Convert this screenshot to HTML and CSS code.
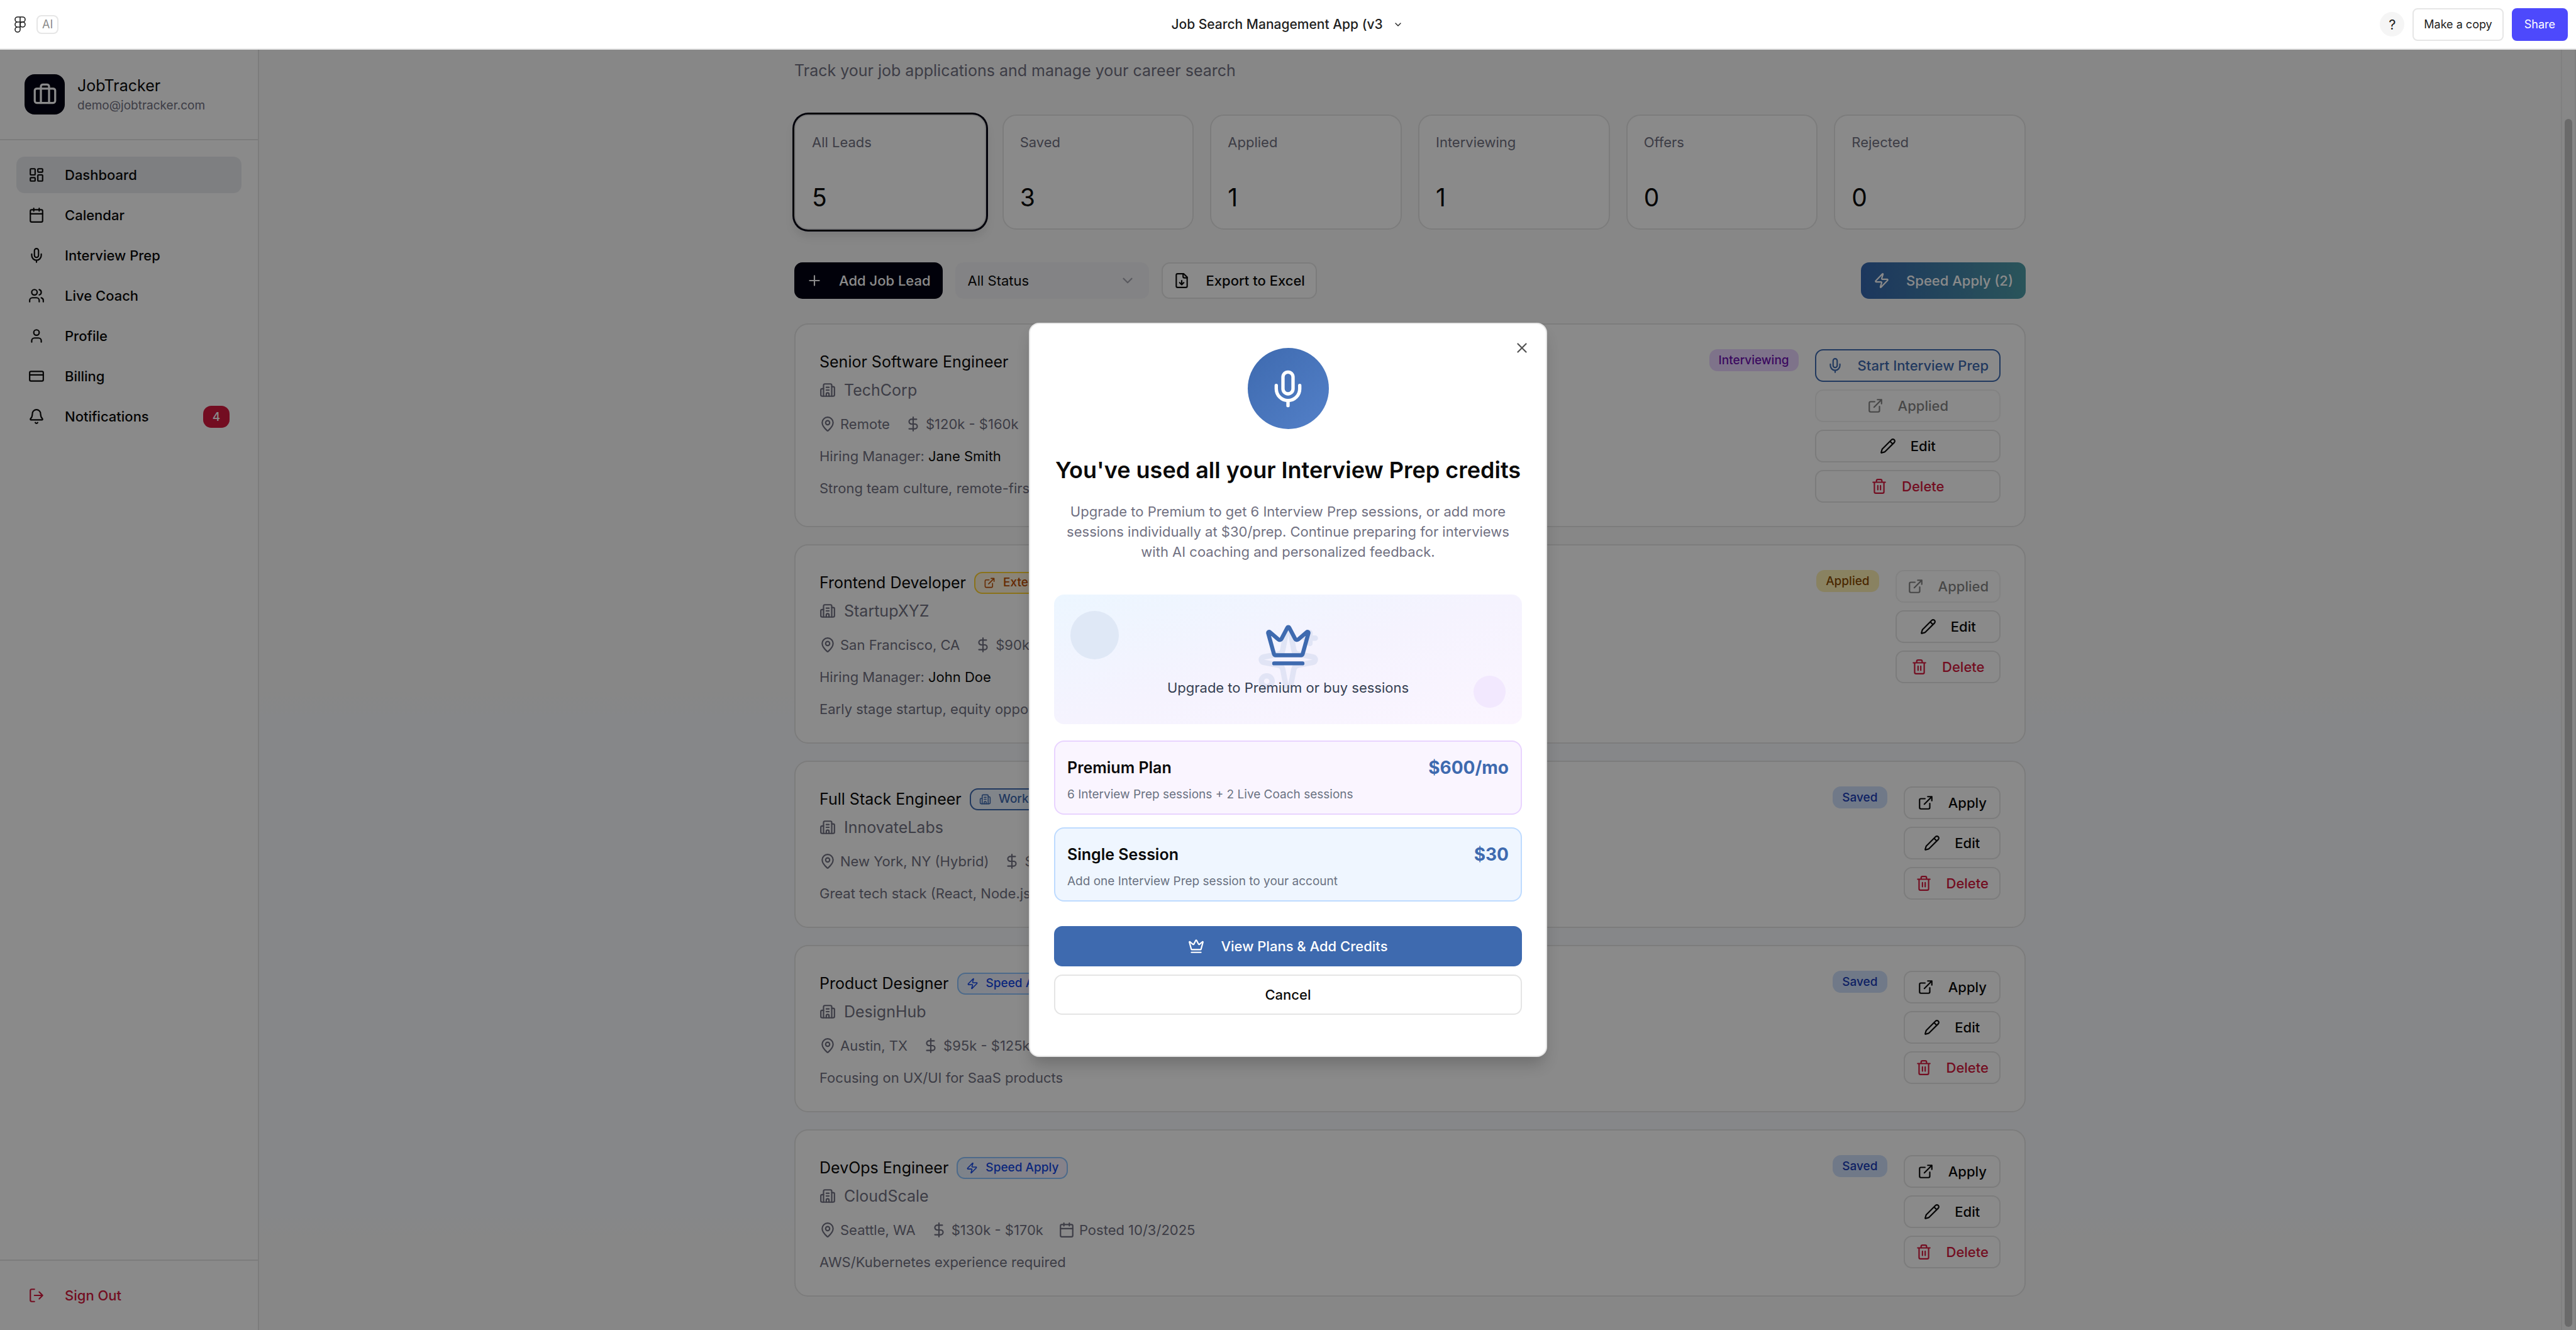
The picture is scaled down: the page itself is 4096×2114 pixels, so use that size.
FILE: index.html
```html
<!DOCTYPE html>
<html lang="en">
<head>
<meta charset="utf-8">
<title>Job Search Management App</title>
<link rel="stylesheet" href="styles.css">
</head>
<body>
<svg class="sprite" aria-hidden="true">
  <symbol id="i-briefcase" viewBox="0 0 24 24"><path d="M16 20V4a2 2 0 0 0-2-2h-4a2 2 0 0 0-2 2v16"/><rect width="20" height="14" x="2" y="6" rx="2"/></symbol>
  <symbol id="i-dashboard" viewBox="0 0 24 24"><rect width="7" height="9" x="3" y="3" rx="1"/><rect width="7" height="5" x="14" y="3" rx="1"/><rect width="7" height="9" x="14" y="12" rx="1"/><rect width="7" height="5" x="3" y="16" rx="1"/></symbol>
  <symbol id="i-calendar" viewBox="0 0 24 24"><path d="M8 2v4M16 2v4"/><rect width="18" height="18" x="3" y="4" rx="2"/><path d="M3 10h18"/></symbol>
  <symbol id="i-mic" viewBox="0 0 24 24"><path d="M12 19v3M19 10v2a7 7 0 0 1-14 0v-2"/><rect x="9" y="2" width="6" height="13" rx="3"/></symbol>
  <symbol id="i-users" viewBox="0 0 24 24"><path d="M16 21v-2a4 4 0 0 0-4-4H6a4 4 0 0 0-4 4v2M16 3.128a4 4 0 0 1 0 7.744M22 21v-2a4 4 0 0 0-3-3.87"/><circle cx="9" cy="7" r="4"/></symbol>
  <symbol id="i-user" viewBox="0 0 24 24"><path d="M19 21v-2a4 4 0 0 0-4-4H9a4 4 0 0 0-4 4v2"/><circle cx="12" cy="7" r="4"/></symbol>
  <symbol id="i-card" viewBox="0 0 24 24"><rect width="20" height="14" x="2" y="5" rx="2"/><path d="M2 10h20"/></symbol>
  <symbol id="i-bell" viewBox="0 0 24 24"><path d="M10.268 21a2 2 0 0 0 3.464 0M3.262 15.326A1 1 0 0 0 4 17h16a1 1 0 0 0 .74-1.673C19.41 13.956 18 12.499 18 8A6 6 0 0 0 6 8c0 4.499-1.411 5.956-2.738 7.326"/></symbol>
  <symbol id="i-logout" viewBox="0 0 24 24"><path d="m16 17 5-5-5-5M21 12H9M9 21H5a2 2 0 0 1-2-2V5a2 2 0 0 1 2-2h4"/></symbol>
  <symbol id="i-plus" viewBox="0 0 24 24"><path d="M5 12h14M12 5v14"/></symbol>
  <symbol id="i-chevron" viewBox="0 0 24 24"><path d="m6 9 6 6 6-6"/></symbol>
  <symbol id="i-file-down" viewBox="0 0 24 24"><path d="M15 2H6a2 2 0 0 0-2 2v16a2 2 0 0 0 2 2h12a2 2 0 0 0 2-2V7Z"/><path d="M14 2v4a2 2 0 0 0 2 2h4M12 18v-6M9 15l3 3 3-3"/></symbol>
  <symbol id="i-zap" viewBox="0 0 24 24"><path d="M4 14a1 1 0 0 1-.78-1.63l9.9-10.2a.5.5 0 0 1 .86.46l-1.92 6.02A1 1 0 0 0 13 10h7a1 1 0 0 1 .78 1.63l-9.9 10.2a.5.5 0 0 1-.86-.46l1.92-6.02A1 1 0 0 0 11 14z"/></symbol>
  <symbol id="i-building" viewBox="0 0 24 24"><path d="M10 12h4M10 8h4M14 21v-3a2 2 0 0 0-4 0v3"/><path d="M6 10H4a2 2 0 0 0-2 2v7a2 2 0 0 0 2 2h16a2 2 0 0 0 2-2V9a2 2 0 0 0-2-2h-2"/><path d="M6 21V5a2 2 0 0 1 2-2h8a2 2 0 0 1 2 2v16"/></symbol>
  <symbol id="i-pin" viewBox="0 0 24 24"><path d="M20 10c0 4.993-5.539 10.193-7.399 11.799a1 1 0 0 1-1.202 0C9.539 20.193 4 14.993 4 10a8 8 0 0 1 16 0"/><circle cx="12" cy="10" r="3"/></symbol>
  <symbol id="i-dollar" viewBox="0 0 24 24"><path d="M12 2v20M17 5H9.500a3.500 3.500 0 0 0 0 7h5a3.500 3.500 0 0 1 0 7H6"/></symbol>
  <symbol id="i-external" viewBox="0 0 24 24"><path d="M15 3h6v6M10 14 21 3M18 13v6a2 2 0 0 1-2 2H5a2 2 0 0 1-2-2V8a2 2 0 0 1 2-2h6"/></symbol>
  <symbol id="i-pencil" viewBox="0 0 24 24"><path d="M21.174 6.812a1 1 0 0 0-3.986-3.987L3.842 16.174a2 2 0 0 0-.5.83l-1.321 4.352a.5.5 0 0 0 .623.622l4.353-1.320a2 2 0 0 0 .83-.497zM15 5l4 4"/></symbol>
  <symbol id="i-trash" viewBox="0 0 24 24"><path d="M10 11v6M14 11v6M19 6v14a2 2 0 0 1-2 2H7a2 2 0 0 1-2-2V6M3 6h18M8 6V4a2 2 0 0 1 2-2h4a2 2 0 0 1 2 2v2"/></symbol>
  <symbol id="i-crown" viewBox="0 0 24 24"><path d="M11.562 3.266a.5.5 0 0 1 .876 0L15.390 8.870a1 1 0 0 0 1.516.294L21.183 5.500a.5.5 0 0 1 .798.519l-2.834 10.246a1 1 0 0 1-.956.734H5.810a1 1 0 0 1-.957-.734L2.020 6.020a.5.5 0 0 1 .798-.519l4.276 3.664a1 1 0 0 0 1.516-.294zM5 21h14"/></symbol>
  <symbol id="i-sparkles" viewBox="0 0 24 24"><path d="M11.017 2.814a1 1 0 0 1 1.966 0l1.051 5.558a2 2 0 0 0 1.594 1.594l5.558 1.051a1 1 0 0 1 0 1.966l-5.558 1.051a2 2 0 0 0-1.594 1.594l-1.051 5.558a1 1 0 0 1-1.966 0l-1.051-5.558a2 2 0 0 0-1.594-1.594l-5.558-1.051a1 1 0 0 1 0-1.966l5.558-1.051a2 2 0 0 0 1.594-1.594zM20 2v4M22 4h-4"/><circle cx="4" cy="20" r="2"/></symbol>
  <symbol id="i-close" viewBox="0 0 24 24"><path d="M18 6 6 18M6 6l12 12"/></symbol>
</svg>

<header class="topbar">
  <div class="topbar-brand">
    <svg class="figma-mark" viewBox="0 0 18 26" aria-hidden="true"><path d="M9 1H5a4 4 0 0 0 0 8h4zM9 1h4a4 4 0 0 1 0 8H9zM9 9H5a4 4 0 0 0 0 8h4zM9 17H5a4 4 0 1 0 4 4z"/><circle cx="13" cy="13" r="4"/></svg>
    <span class="ai-tag">AI</span>
  </div>
  <button class="file-title" type="button">Job Search Management App (v3 <svg class="icon title-chevron"><use href="#i-chevron"/></svg></button>
  <div class="topbar-actions">
    <button class="help" type="button">?</button>
    <button class="copy" type="button">Make a copy</button>
    <button class="share" type="button">Share</button>
  </div>
</header>

<div class="workspace">
  <aside class="sidebar">
    <div class="brand">
      <span class="brand-logo"><svg class="icon icon-lg"><use href="#i-briefcase"/></svg></span>
      <div>
        <div class="brand-name">JobTracker</div>
        <div class="brand-mail">demo@jobtracker.com</div>
      </div>
    </div>
    <nav class="nav">
      <a class="nav-item active" href="#dashboard"><svg class="icon"><use href="#i-dashboard"/></svg>Dashboard</a>
      <a class="nav-item" href="#calendar"><svg class="icon"><use href="#i-calendar"/></svg>Calendar</a>
      <a class="nav-item" href="#prep"><svg class="icon"><use href="#i-mic"/></svg>Interview Prep</a>
      <a class="nav-item" href="#coach"><svg class="icon"><use href="#i-users"/></svg>Live Coach</a>
      <a class="nav-item" href="#profile"><svg class="icon"><use href="#i-user"/></svg>Profile</a>
      <a class="nav-item" href="#billing"><svg class="icon"><use href="#i-card"/></svg>Billing</a>
      <a class="nav-item" href="#notifications"><svg class="icon"><use href="#i-bell"/></svg>Notifications<span class="count">4</span></a>
    </nav>
    <div class="sidebar-foot">
      <button class="nav-item sign-out" type="button"><svg class="icon"><use href="#i-logout"/></svg>Sign Out</button>
    </div>
  </aside>

  <main class="content">
    <div class="container">
      <p class="subtitle">Track your job applications and manage your career search</p>

      <section class="stats">
        <button class="stat selected" type="button"><span class="stat-label">All Leads</span><span class="stat-value">5</span></button>
        <button class="stat" type="button"><span class="stat-label">Saved</span><span class="stat-value">3</span></button>
        <button class="stat" type="button"><span class="stat-label">Applied</span><span class="stat-value">1</span></button>
        <button class="stat" type="button"><span class="stat-label">Interviewing</span><span class="stat-value">1</span></button>
        <button class="stat" type="button"><span class="stat-label">Offers</span><span class="stat-value">0</span></button>
        <button class="stat" type="button"><span class="stat-label">Rejected</span><span class="stat-value">0</span></button>
      </section>

      <div class="toolbar">
        <button class="btn btn-dark" type="button"><svg class="icon"><use href="#i-plus"/></svg>Add Job Lead</button>
        <div class="select-wrap">
          <select class="select" aria-label="Status filter"><option>All Status</option><option>Saved</option><option>Applied</option></select>
          <svg class="icon select-chevron"><use href="#i-chevron"/></svg>
        </div>
        <button class="btn" type="button"><svg class="icon"><use href="#i-file-down"/></svg>Export to Excel</button>
        <button class="btn btn-speed" type="button"><svg class="icon"><use href="#i-zap"/></svg>Speed Apply (2)</button>
      </div>

      <section class="leads">
        <article class="lead">
          <div class="lead-info">
            <h3 class="lead-title">Senior Software Engineer</h3>
            <div class="company"><svg class="icon"><use href="#i-building"/></svg>TechCorp</div>
            <div class="meta">
              <span class="meta-item"><svg class="icon"><use href="#i-pin"/></svg>Remote</span>
              <span class="meta-item"><svg class="icon"><use href="#i-dollar"/></svg>$120k - $160k</span>
            </div>
            <p class="line">Hiring Manager: <span class="strong">Jane Smith</span></p>
            <p class="line">Strong team culture, remote-first</p>
          </div>
          <div class="lead-side">
            <span class="status interviewing">Interviewing</span>
            <div class="actions">
              <button class="btn btn-sm btn-prep" type="button"><svg class="icon"><use href="#i-mic"/></svg>Start Interview Prep</button>
              <button class="btn btn-sm" type="button" disabled><svg class="icon"><use href="#i-external"/></svg>Applied</button>
              <button class="btn btn-sm" type="button"><svg class="icon"><use href="#i-pencil"/></svg>Edit</button>
              <button class="btn btn-sm btn-danger" type="button"><svg class="icon"><use href="#i-trash"/></svg>Delete</button>
            </div>
          </div>
        </article>

        <article class="lead">
          <div class="lead-info">
            <h3 class="lead-title">Frontend Developer <span class="tag tag-external"><svg class="icon icon-xs"><use href="#i-external"/></svg>External</span></h3>
            <div class="company"><svg class="icon"><use href="#i-building"/></svg>StartupXYZ</div>
            <div class="meta">
              <span class="meta-item"><svg class="icon"><use href="#i-pin"/></svg>San Francisco, CA</span>
              <span class="meta-item"><svg class="icon"><use href="#i-dollar"/></svg>$90k</span>
            </div>
            <p class="line">Hiring Manager: <span class="strong">John Doe</span></p>
            <p class="line">Early stage startup, equity opportunity</p>
          </div>
          <div class="lead-side">
            <span class="status applied">Applied</span>
            <div class="actions">
              <button class="btn btn-sm" type="button" disabled><svg class="icon"><use href="#i-external"/></svg>Applied</button>
              <button class="btn btn-sm" type="button"><svg class="icon"><use href="#i-pencil"/></svg>Edit</button>
              <button class="btn btn-sm btn-danger" type="button"><svg class="icon"><use href="#i-trash"/></svg>Delete</button>
            </div>
          </div>
        </article>

        <article class="lead">
          <div class="lead-info">
            <h3 class="lead-title">Full Stack Engineer <span class="tag tag-workday"><svg class="icon icon-xs"><use href="#i-building"/></svg>Workday</span></h3>
            <div class="company"><svg class="icon"><use href="#i-building"/></svg>InnovateLabs</div>
            <div class="meta">
              <span class="meta-item"><svg class="icon"><use href="#i-pin"/></svg>New York, NY (Hybrid)</span>
              <span class="meta-item"><svg class="icon"><use href="#i-dollar"/></svg>$110k</span>
            </div>
            <p class="line">Great tech stack (React, Node.js)</p>
          </div>
          <div class="lead-side">
            <span class="status saved">Saved</span>
            <div class="actions">
              <button class="btn btn-sm" type="button"><svg class="icon"><use href="#i-external"/></svg>Apply</button>
              <button class="btn btn-sm" type="button"><svg class="icon"><use href="#i-pencil"/></svg>Edit</button>
              <button class="btn btn-sm btn-danger" type="button"><svg class="icon"><use href="#i-trash"/></svg>Delete</button>
            </div>
          </div>
        </article>

        <article class="lead">
          <div class="lead-info">
            <h3 class="lead-title">Product Designer <span class="tag tag-speed"><svg class="icon icon-xs"><use href="#i-zap"/></svg>Speed Apply</span></h3>
            <div class="company"><svg class="icon"><use href="#i-building"/></svg>DesignHub</div>
            <div class="meta">
              <span class="meta-item"><svg class="icon"><use href="#i-pin"/></svg>Austin, TX</span>
              <span class="meta-item"><svg class="icon"><use href="#i-dollar"/></svg>$95k - $125k</span>
            </div>
            <p class="line">Focusing on UX/UI for SaaS products</p>
          </div>
          <div class="lead-side">
            <span class="status saved">Saved</span>
            <div class="actions">
              <button class="btn btn-sm" type="button"><svg class="icon"><use href="#i-external"/></svg>Apply</button>
              <button class="btn btn-sm" type="button"><svg class="icon"><use href="#i-pencil"/></svg>Edit</button>
              <button class="btn btn-sm btn-danger" type="button"><svg class="icon"><use href="#i-trash"/></svg>Delete</button>
            </div>
          </div>
        </article>

        <article class="lead">
          <div class="lead-info">
            <h3 class="lead-title">DevOps Engineer <span class="tag tag-speed"><svg class="icon icon-xs"><use href="#i-zap"/></svg>Speed Apply</span></h3>
            <div class="company"><svg class="icon"><use href="#i-building"/></svg>CloudScale</div>
            <div class="meta">
              <span class="meta-item"><svg class="icon"><use href="#i-pin"/></svg>Seattle, WA</span>
              <span class="meta-item"><svg class="icon"><use href="#i-dollar"/></svg>$130k - $170k</span>
              <span class="meta-item"><svg class="icon"><use href="#i-calendar"/></svg>Posted 10/3/2025</span>
            </div>
            <p class="line">AWS/Kubernetes experience required</p>
          </div>
          <div class="lead-side">
            <span class="status saved">Saved</span>
            <div class="actions">
              <button class="btn btn-sm" type="button"><svg class="icon"><use href="#i-external"/></svg>Apply</button>
              <button class="btn btn-sm" type="button"><svg class="icon"><use href="#i-pencil"/></svg>Edit</button>
              <button class="btn btn-sm btn-danger" type="button"><svg class="icon"><use href="#i-trash"/></svg>Delete</button>
            </div>
          </div>
        </article>
      </section>
    </div>
  </main>

  <div class="scroll-track"><div class="scroll-thumb"></div></div>

  <div class="overlay">
    <div class="modal" role="dialog" aria-modal="true" aria-labelledby="modal-title">
      <button class="modal-close" type="button" aria-label="Close"><svg class="icon"><use href="#i-close"/></svg></button>
      <span class="modal-badge"><svg class="icon icon-mic"><use href="#i-mic"/></svg></span>
      <h2 class="modal-title" id="modal-title">You've used all your Interview Prep credits</h2>
      <p class="modal-text">Upgrade to Premium to get 6 Interview Prep sessions, or add more sessions individually at $30/prep. Continue preparing for interviews with AI coaching and personalized feedback.</p>
      <div class="banner">
        <span class="dot dot-blue"></span>
        <span class="dot dot-purple"></span>
        <svg class="icon banner-sparkles"><use href="#i-sparkles"/></svg>
        <svg class="icon banner-crown"><use href="#i-crown"/></svg>
        <p class="banner-text">Upgrade to Premium or buy sessions</p>
      </div>
      <div class="plans">
        <div class="plan plan-premium">
          <div class="plan-head"><h4 class="plan-name">Premium Plan</h4><span class="plan-price">$600/mo</span></div>
          <p class="plan-note">6 Interview Prep sessions + 2 Live Coach sessions</p>
        </div>
        <div class="plan plan-single">
          <div class="plan-head"><h4 class="plan-name">Single Session</h4><span class="plan-price">$30</span></div>
          <p class="plan-note">Add one Interview Prep session to your account</p>
        </div>
      </div>
      <div class="modal-actions">
        <button class="btn btn-lg btn-primary" type="button"><svg class="icon"><use href="#i-crown"/></svg>View Plans &amp; Add Credits</button>
        <button class="btn btn-lg" type="button">Cancel</button>
      </div>
    </div>
  </div>
</div>
</body>
</html>
```
FILE: styles.css
```css
:root {
  --blue: #3e6aaf;
  --ink: #0a0a0a;
  --muted: #717182;
  --line: #e5e5e5;
  --red: #d4183d;
}

* { box-sizing: border-box; }

body {
  margin: 0;
  height: 100vh;
  display: flex;
  flex-direction: column;
  overflow: hidden;
  background: #fff;
  color: var(--ink);
  font-family: Inter, "Liberation Sans", sans-serif;
  font-size: 22px;
  line-height: 32px;
}

h2, h3, h4, p { margin: 0; font-weight: 400; }
button, select { font: inherit; color: inherit; }
a { color: inherit; text-decoration: none; }

.sprite { display: none; }

.icon {
  flex: none;
  width: 26px;
  height: 26px;
  fill: none;
  stroke: currentColor;
  stroke-width: 2;
  stroke-linecap: round;
  stroke-linejoin: round;
}
.icon-lg { width: 39px; height: 39px; }
.icon-xs { width: 19px; height: 19px; }
.icon-mic { width: 64px; height: 64px; }

/* Top bar */
.topbar {
  flex: none;
  display: grid;
  grid-template-columns: 1fr auto 1fr;
  align-items: center;
  height: 79px;
  padding: 0 13px 0 23px;
  border-bottom: 2px solid #e6e6e6;
}
.topbar-brand { display: flex; align-items: center; gap: 17px; }
.figma-mark { width: 18px; height: 26px; fill: none; stroke: #1e1e1e; stroke-width: 1.6; }
.ai-tag {
  padding: 0 7px;
  border: 2px solid #e6e6e6;
  border-radius: 8px;
  color: #8c8c8c;
  font-size: 18px;
  line-height: 26px;
}
.file-title {
  display: flex;
  align-items: center;
  gap: 16px;
  padding: 0 13px 0 0;
  border: 0;
  background: none;
  color: #1e1e1e;
  font-size: 21px;
  font-weight: 500;
}
.title-chevron { width: 16px; height: 16px; }
.topbar-actions { display: flex; align-items: center; justify-content: flex-end; gap: 13px; }
.help {
  width: 39px;
  height: 39px;
  padding: 0;
  border: 0;
  border-radius: 50%;
  background: #f5f5f5;
  color: #1e1e1e;
}
.copy, .share {
  height: 52px;
  padding: 0 18px;
  border: 2px solid #e6e6e6;
  border-radius: 8px;
  background: #fff;
  color: #1e1e1e;
  font-size: 18px;
}
.copy { padding: 0 16px; }
.share { border-color: #4d49fc; background: #4d49fc; color: #fff; }

/* Workspace */
.workspace { position: relative; flex: 1; min-height: 0; display: flex; }

.sidebar {
  flex: none;
  display: flex;
  flex-direction: column;
  width: 412px;
  border-right: 2px solid var(--line);
  background: #fff;
}
.brand {
  display: flex;
  align-items: center;
  gap: 20px;
  padding: 39px;
  border-bottom: 2px solid var(--line);
}
.brand-logo {
  display: grid;
  place-items: center;
  width: 64px;
  height: 64px;
  border-radius: 16px;
  background: #030213;
  color: #fff;
}
.brand-name { font-size: 25px; line-height: 36px; }
.brand-mail { color: var(--muted); font-size: 19px; line-height: 28px; }

.nav { flex: 1; display: flex; flex-direction: column; gap: 6px; padding: 26px; }
.nav-item {
  display: flex;
  align-items: center;
  gap: 32px;
  width: 100%;
  height: 58px;
  padding: 0 19px;
  border: 0;
  border-radius: 13px;
  background: none;
  font-weight: 500;
}
.nav-item.active { background: #e9ebef; }
.count {
  margin-left: auto;
  width: 42px;
  border-radius: 13px;
  background: var(--red);
  color: #fff;
  font-size: 19px;
  line-height: 35px;
  text-align: center;
}
.sidebar-foot { padding: 26px; border-top: 2px solid var(--line); }
.sign-out { color: var(--red); }

.content {
  flex: 1;
  min-width: 0;
  padding: 13px 52px 52px;
  overflow: hidden;
  background: linear-gradient(#f9f9f9 50%, #f8fafd 52%, #f8fafd 91%, #f9f9f9 93%);
}
.container { max-width: 1958px; margin: 0 auto; }
.subtitle { color: var(--muted); font-size: 25px; line-height: 40px; }

.stats { display: grid; grid-template-columns: repeat(6, 1fr); gap: 26px; margin-top: 50px; }
.stat {
  display: flex;
  flex-direction: column;
  gap: 46px;
  padding: 26px 26px 23px;
  border: 2px solid var(--line);
  border-radius: 22px;
  background: #fff;
  text-align: left;
}
.stat.selected { box-shadow: 0 0 0 3px #030213, 0 10px 16px rgba(0, 0, 0, .1); }
.stat-label { color: var(--muted); }
.stat-value { font-size: 39px; line-height: 52px; }

.toolbar { display: flex; gap: 20px; margin-top: 52px; }
.btn {
  display: flex;
  align-items: center;
  justify-content: center;
  gap: 26px;
  height: 58px;
  padding: 0 17px;
  border: 2px solid var(--line);
  border-radius: 13px;
  background: #fff;
  font-weight: 500;
  white-space: nowrap;
}
.btn:disabled { opacity: .5; }
.btn-dark { border-color: #030213; background: #030213; color: #fff; }
.btn-speed {
  margin-left: auto;
  border: 0;
  padding: 0 20px;
  background: linear-gradient(90deg, #3566ae, #4e9ca7);
  color: #fff;
}
.btn-sm { gap: 23px; height: 52px; }
.btn-lg { height: 64px; }
.btn-prep { border-color: var(--blue); color: var(--blue); }
.btn-danger { color: var(--red); }
.btn-primary { border-color: var(--blue); background: var(--blue); color: #fff; }

.select-wrap { position: relative; width: 308px; }
.select {
  appearance: none;
  width: 100%;
  height: 58px;
  padding: 0 20px;
  border: 0;
  border-radius: 13px;
  background: #f3f3f5;
}
.select-chevron { position: absolute; right: 21px; top: 16px; color: var(--muted); opacity: .6; }

/* Lead cards */
.leads { display: flex; flex-direction: column; gap: 27px; margin-top: 39px; }
.lead {
  display: flex;
  justify-content: space-between;
  align-items: flex-start;
  padding: 39px 38px 37px;
  border: 2px solid var(--line);
  border-radius: 22px;
  background: #fff;
}
.lead-info { display: flex; flex-direction: column; gap: 19px; color: var(--muted); }
.lead-title {
  display: flex;
  align-items: center;
  gap: 13px;
  height: 40px;
  margin-bottom: -13px;
  color: var(--ink);
  font-size: 25px;
}
.company { display: flex; align-items: center; gap: 13px; height: 38px; font-size: 25px; }
.meta { display: flex; gap: 24px; }
.meta-item { display: flex; align-items: center; gap: 7px; }
.strong { color: var(--ink); }

.tag, .status {
  display: flex;
  align-items: center;
  gap: 12px;
  height: 35px;
  padding: 0 13px;
  border: 2px solid transparent;
  border-radius: 13px;
  font-size: 19px;
  font-weight: 500;
}
.tag-external { border-color: #ffd230; background: #fff4dc; color: #bb4d00; }
.tag-workday { border-color: var(--blue); background: #eff6ff; color: var(--blue); }
.tag-speed { border-color: #8ec5ff; background: linear-gradient(90deg, #e8f2ff, #f8f0ff); color: #1447e6; }

.lead-side { display: flex; align-items: flex-start; gap: 26px; }
.actions { display: flex; flex-direction: column; gap: 12px; }
.interviewing { border: 0; padding: 0 15px; background: #e9d4ff; color: #6e11b0; }
.applied { border: 0; padding: 0 15px; background: #fdf0b4; color: #894b00; }
.saved { border: 0; padding: 0 15px; background: #cfe0fb; color: #193cb8; }

.scroll-track {
  flex: none;
  width: 24px;
  padding: 110px 4px 5px;
  border-left: 2px solid #ededed;
  border-right: 2px solid #ededed;
  background: #fafafa;
}
.scroll-thumb { height: 100%; border-radius: 6px; background: #c4c4c4; }

/* Dialog */
.overlay {
  position: absolute;
  inset: 0;
  display: flex;
  align-items: center;
  justify-content: center;
  background: rgba(0, 0, 0, .46);
}
.modal {
  position: relative;
  display: flex;
  flex-direction: column;
  align-items: center;
  width: 824px;
  padding: 38px 38px 65px;
  border: 2px solid var(--line);
  border-radius: 16px;
  background: #fff;
  box-shadow: 0 16px 24px -5px rgba(0, 0, 0, .2);
}
.modal-close {
  position: absolute;
  top: 25px;
  right: 25px;
  display: flex;
  padding: 0;
  border: 0;
  background: none;
  opacity: .7;
}
.modal-badge {
  display: grid;
  place-items: center;
  width: 129px;
  height: 129px;
  border-radius: 50%;
  background: linear-gradient(135deg, #3e6aaf, #5380c8);
  color: #fff;
}
.modal-title { margin-top: 39px; font-size: 36px; font-weight: 600; line-height: 52px; white-space: nowrap; }
.modal-text { margin-top: 24px; color: var(--muted); text-align: center; }
.banner {
  position: relative;
  display: flex;
  flex-direction: column;
  align-items: center;
  justify-content: center;
  gap: 13px;
  width: 100%;
  height: 206px;
  margin-top: 52px;
  border-radius: 16px;
  background: linear-gradient(to bottom right, #ecf6ff, #f5f3fe, #fbf5ff);
}
.dot { position: absolute; border-radius: 50%; }
.dot-blue { top: 26px; left: 26px; width: 77px; height: 77px; background: #dfe8f6; }
.dot-purple { right: 26px; bottom: 26px; width: 51px; height: 51px; background: #f2e8fe; }
.banner-sparkles { position: absolute; inset: 0; width: 103px; height: 103px; margin: auto; color: var(--blue); opacity: .1; }
.banner-crown { position: relative; width: 77px; height: 77px; color: var(--blue); }
.banner-text { position: relative; color: #364153; }

.plans { display: flex; flex-direction: column; gap: 20px; width: 100%; margin-top: 26px; }
.plan { padding: 19px 19px 17px; border: 2px solid; border-radius: 16px; }
.plan-premium { border-color: #e9d4ff; background: #faf5ff; }
.plan-single { border-color: #bedbff; background: #eff6ff; }
.plan-head { display: flex; align-items: center; justify-content: space-between; line-height: 44px; }
.plan-name { font-size: 25px; font-weight: 600; }
.plan-price { color: var(--blue); font-size: 28px; font-weight: 700; }
.plan-note { margin-top: 8px; color: #6a7282; font-size: 19px; line-height: 26px; }

.modal-actions { display: flex; flex-direction: column; gap: 13px; width: 100%; margin-top: 39px; }
```
